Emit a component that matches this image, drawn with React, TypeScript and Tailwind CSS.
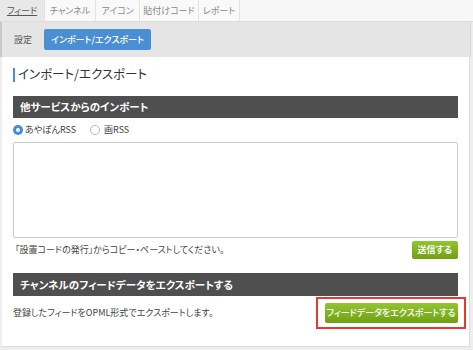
import React from "react";

const font = { fontFamily: '"Noto Sans CJK JP", "Noto Sans", sans-serif' };

export default function App() {
  const tabs: [string, string][] = [
    ["フィード", "w-[45px]"],
    ["チャンネル", "w-[51px]"],
    ["アイコン", "w-[44px]"],
    ["貼付けコード", "w-[59px]"],
    ["レポート", "w-[41px]"],
  ];
  return (
    <div
      className="w-[473px] h-[350px] bg-[#eeeeee] overflow-hidden text-[#444] [font-feature-settings:'palt']"
      style={font}
    >
      {/* tabs */}
      <div className="flex h-[22px] bg-[#f7f7f7] border-b border-[#dcdcdc]">
        {tabs.map(([t, w], i) => (
          <div
            key={t}
            className={
              w +
              " flex items-center justify-center text-[9px] border-r border-[#e2e2e2] whitespace-nowrap " +
              (i === 0 ? "bg-[#e8e8e8] underline text-[#555]" : "bg-[#f9f9f9] text-[#888]")
            }
          >
            {t}
          </div>
        ))}
        <div className="flex-1" />
      </div>
      {/* subnav */}
      <div className="flex items-center h-[35px] bg-[#e5e5e5] border-l-2 border-[#c8c8c8] border-r border-r-[#d4d4d4] mr-[2px] pl-[12px]">
        <span className="text-[9px] text-[#555]">設定</span>
        <div className="ml-[12px] h-[21px] px-[7px] flex items-center bg-[#4a8fd3] rounded-[2px] text-white text-[9px] font-medium">
          インポート/エクスポート
        </div>
      </div>
      {/* panel */}
      <div className="ml-[2px] mr-[3px] h-[290px] bg-white border-r border-[#dedede] border-b px-[11px] pt-[10px]">
        <div className="flex items-center h-[15px]">
          <div className="w-[2px] h-[14px] bg-[#4a8fd3] mr-[3px]" />
          <span className="text-[12.5px] text-[#333]">インポート/エクスポート</span>
        </div>
        <div className="mt-[14px] h-[22px] bg-[#4f4f4f] flex items-center pl-[7px] text-white text-[10.5px] font-bold">
          他サービスからのインポート
        </div>
        <div className="flex items-center h-[24px] text-[9px] text-[#444]">
          <span className="w-[10px] h-[10px] rounded-full bg-[#3d8ee0] flex items-center justify-center mr-[2px]">
            <span className="w-[4px] h-[4px] rounded-full bg-white" />
          </span>
          <span>あやぽんRSS</span>
          <span className="w-[10px] h-[10px] rounded-full border border-[#bbb] bg-white ml-[14px] mr-[4px]" />
          <span>画RSS</span>
        </div>
        <div className="h-[96px] border border-[#cccccc] rounded-[2px]" />
        <div className="flex items-start justify-between mt-[3px]">
          <span className="text-[9px] text-[#444] mt-[2px] ml-[2px]">「設置コードの発行」からコピー・ペーストしてください。</span>
          <div className="h-[18px] px-[6px] flex items-center rounded-[2px] bg-gradient-to-b from-[#92c62e] to-[#6fa014] text-white text-[9px] font-bold whitespace-nowrap">
            送信する
          </div>
        </div>
        <div className="mt-[14px] h-[23px] bg-[#4f4f4f] flex items-center pl-[7px] text-white text-[10.5px] font-bold">
          チャンネルのフィードデータをエクスポートする
        </div>
        <div className="flex items-center justify-between">
          <span className="text-[9px] text-[#444]">登録したフィードをOPML形式でエクスポートします。</span>
          <div className="border-2 border-[#e23a2e] h-[32px] w-[150px] flex items-center justify-center mr-[-8px] mt-[1px]">
            <div className="h-[20px] w-[133px] flex items-center justify-center rounded-[2px] bg-gradient-to-b from-[#92c62e] to-[#6fa014] text-white text-[9px] font-medium whitespace-nowrap">
              フィードデータをエクスポートする
            </div>
          </div>
        </div>
      </div>
    </div>
  );
}
